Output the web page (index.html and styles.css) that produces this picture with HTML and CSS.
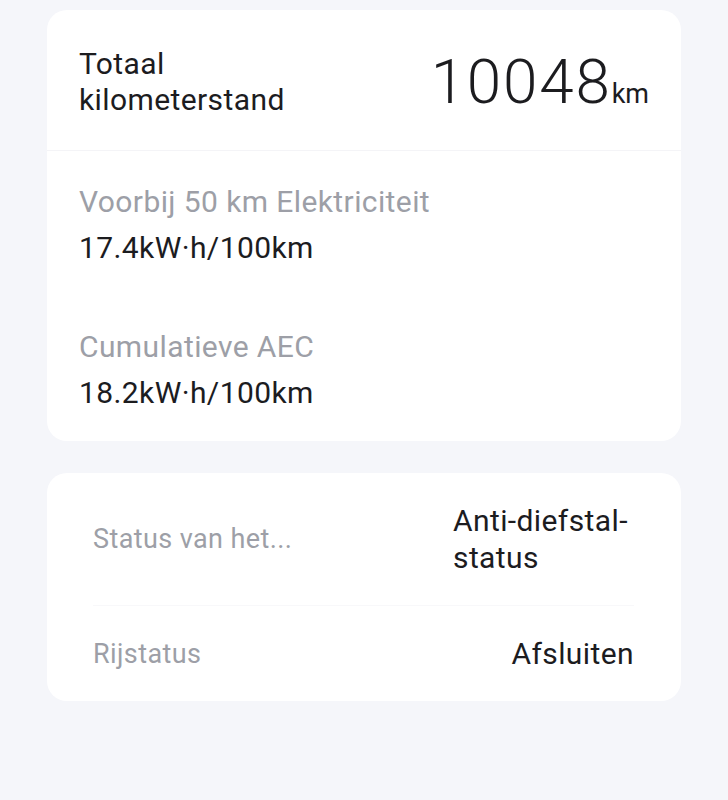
FILE: index.html
```html
<!DOCTYPE html>
<html lang="nl">
<head>
  <meta charset="UTF-8">
  <meta name="viewport" content="width=device-width, initial-scale=1.0">
  <title>Voertuiggegevens</title>
  <link rel="stylesheet" href="styles.css">
</head>
<body>
  <div class="page">
    <div class="card stats">
      <div class="odo-row">
        <div class="odo-title">Totaal kilometerstand</div>
        <div class="odo">
          <span class="odo-num">10048</span><span class="odo-unit">km</span>
        </div>
      </div>
      <div class="usage">
        <div class="usage-item">
          <div class="label">Voorbij 50 km Elektriciteit</div>
          <div class="value">17.4kW·h/100km</div>
        </div>
        <div class="usage-item">
          <div class="label">Cumulatieve AEC</div>
          <div class="value">18.2kW·h/100km</div>
        </div>
      </div>
    </div>

    <div class="card status">
      <div class="status-row">
        <div class="status-label">Status van het...</div>
        <div class="status-value">Anti-diefstal-status</div>
      </div>
      <div class="status-row">
        <div class="status-label">Rijstatus</div>
        <div class="status-value">Afsluiten</div>
      </div>
    </div>
  </div>
</body>
</html>
```

FILE: styles.css
```css
body {
  font-family: Roboto, 'Liberation Sans', sans-serif;
  background-color: #f5f6fa;
  color: #1c1c1f;
  margin: 0;
  letter-spacing: 0.4px;
}
.page {
  padding: 10px 47px 0;
  display: flex;
  flex-direction: column;
  gap: 32px;
}
.card {
  background-color: #ffffff;
  border-radius: 20px;
}
.odo-row {
  display: flex;
  justify-content: space-between;
  align-items: center;
  padding: 36px 32px 32px;
  border-bottom: 1px solid #f4f4f7;
}
.odo-title {
  font-size: 30px;
  line-height: 36px;
  max-width: 240px;
}
.odo {
  line-height: 1;
  white-space: nowrap;
}
.odo-num {
  font-size: 62px;
  font-weight: 300;
  letter-spacing: 1.8px;
}
.odo-unit {
  font-size: 27px;
  letter-spacing: 0;
}
.usage {
  display: flex;
  flex-direction: column;
  gap: 63px;
  padding: 33px 32px 30px;
}
.usage-item {
  display: flex;
  flex-direction: column;
  gap: 10px;
}
.label {
  font-size: 30px;
  line-height: 36px;
  color: #9d9fa7;
}
.value {
  font-size: 30px;
  line-height: 36px;
}
.status {
  padding: 0 47px 0 46px;
}
.status-row {
  display: flex;
  justify-content: space-between;
  align-items: center;
  padding: 29px 0;
}
.status-row + .status-row {
  border-top: 1px solid #f8f8fa;
}
.status-label {
  font-size: 27px;
  line-height: 32px;
  color: #9d9fa7;
}
.status-value {
  font-size: 30px;
  line-height: 37px;
  max-width: 181px;
}
```
